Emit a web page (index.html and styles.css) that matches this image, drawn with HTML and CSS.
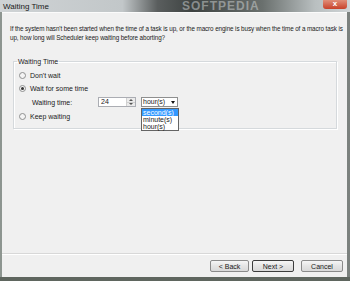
FILE: index.html
```html
<!DOCTYPE html>
<html lang="en">
<head>
    <meta charset="UTF-8">
    <title>Waiting Time</title>
    <link rel="stylesheet" href="styles.css">
</head>
<body>
<div class="window">
    <div class="titlebar">
        <span class="title">Waiting Time</span>
        <span class="brand">SOFTPEDIA</span>
        <span class="close">x</span>
    </div>

    <div class="client">
        <p class="desc">If the system hasn't been started when the time of a task is up, or the macro engine is busy when the time of a macro task is<br>up, how long will Scheduler keep waiting before aborting?</p>

        <fieldset class="group">
            <legend>Waiting Time</legend>
            <div class="row first"><span class="radio"></span>Don't wait</div>
            <div class="row"><span class="radio on"></span>Wait for some time</div>
            <div class="row controls">
                <span class="label">Waiting time:</span>
                <div class="spin">
                    <span class="spin-value">24</span>
                    <span class="spin-btns"><i class="up"></i><i class="down"></i></span>
                </div>
                <div class="combo">
                    <span class="combo-value">hour(s)</span>
                    <span class="combo-arrow"><i></i></span>
                    <ul class="combo-list">
                        <li class="sel">second(s)</li>
                        <li>minute(s)</li>
                        <li>hour(s)</li>
                    </ul>
                </div>
            </div>
            <div class="row last"><span class="radio"></span>Keep waiting</div>
        </fieldset>

        <div class="spacer"></div>

        <div class="footer">
            <button class="btn back">&lt; Back</button>
            <button class="btn next">Next &gt;</button>
            <button class="btn cancel">Cancel</button>
        </div>
    </div>
</div>
</body>
</html>
```
FILE: styles.css
```css
body {
    margin: 0;
    width: 350px;
    height: 281px;
    overflow: hidden;
    background: #5f665f;
    font-family: "Liberation Sans", Arial, sans-serif;
}

.window {
    height: 277px;
    display: flex;
    flex-direction: column;
    padding: 0 3px 0 2px;
    background: linear-gradient(to right, #8d9590, #a9b0ac 30%, #7b817e 100%);
}

.titlebar {
    position: relative;
    height: 12px;
    display: flex;
    align-items: center;
    margin: 0 -3px 0 -2px;
    padding-left: 3px;
    background: linear-gradient(to right, #cfd3d5 0%, #c2c7c9 35%, #5a5e5e 45%, #3e4342 55%, #6a706e 75%, #b9bfc0 90%, #cfd4d6 100%);
}
.title {
    font-size: 8px;
    color: #1a1a1a;
}
.brand {
    position: absolute;
    left: 182px;
    top: 0;
    font-size: 12px;
    line-height: 12px;
    font-weight: bold;
    letter-spacing: 1px;
    color: rgba(210, 214, 214, 0.5);
}
.close {
    position: absolute;
    right: 3px;
    top: 0;
    width: 24px;
    height: 9px;
    line-height: 8px;
    text-align: center;
    font-size: 8px;
    font-weight: bold;
    color: #fff;
    background: linear-gradient(#e08e78, #c8412a);
    border-radius: 0 0 3px 3px;
}

.client {
    flex: 1;
    display: flex;
    flex-direction: column;
    background: #f0f0f0;
    border-top: 1px solid #fbfbfb;
    font-size: 7px;
    color: #1a1a1a;
}

.desc {
    margin: 11px 0 0 8px;
    font-size: 6.3px;
    letter-spacing: -0.1px;
    line-height: 9px;
    white-space: nowrap;
}

.group {
    margin: 15px 10px 0 11px;
    padding: 0 0 7px 5px;
    border: 1px solid #d5d9dc;
    box-shadow: inset 1px 1px 0 #fff, 1px 1px 0 #fff;
}
.group legend {
    padding: 0 1px;
    margin-left: -2px;
    line-height: 9px;
}

.row {
    display: flex;
    align-items: center;
    height: 9px;
    margin-top: 4px;
}
.row.first {
    margin-top: 5px;
}
.row.last {
    margin-top: 5px;
}
.radio {
    width: 5px;
    height: 5px;
    border: 1px solid #8e8f8f;
    border-radius: 50%;
    background: #f4f4f4;
    margin-right: 4px;
    display: flex;
    align-items: center;
    justify-content: center;
}
.radio.on::after {
    content: "";
    width: 3px;
    height: 3px;
    border-radius: 50%;
    background: #333;
}

.controls {
    height: 10px;
    margin-top: 4px;
}
.label {
    margin-left: 13px;
    width: 66px;
}
.spin {
    display: flex;
    width: 36px;
    height: 8px;
    border: 1px solid #abadb3;
    background: #fff;
}
.spin-value {
    flex: 1;
    padding-left: 2px;
    line-height: 8px;
}
.spin-btns {
    width: 8px;
    display: flex;
    flex-direction: column;
    border-left: 1px solid #d0d0d0;
    background: #ebebeb;
}
.spin-btns i {
    flex: 1;
    display: flex;
    align-items: center;
    justify-content: center;
}
.spin-btns i::after {
    content: "";
    border-left: 2px solid transparent;
    border-right: 2px solid transparent;
}
.spin-btns .up::after {
    border-bottom: 2px solid #555;
}
.spin-btns .down {
    border-top: 1px solid #d0d0d0;
}
.spin-btns .down::after {
    border-top: 2px solid #555;
}

.combo {
    position: relative;
    display: flex;
    width: 35px;
    height: 8px;
    margin-left: 5px;
    border: 1px solid #8e8f8f;
    background: #fff;
}
.combo-value {
    flex: 1;
    padding-left: 1px;
    line-height: 8px;
}
.combo-arrow {
    width: 8px;
    display: flex;
    align-items: center;
    justify-content: center;
}
.combo-arrow i {
    border-left: 2px solid transparent;
    border-right: 2px solid transparent;
    border-top: 3px solid #111;
}
.combo-list {
    position: absolute;
    left: -1px;
    top: 10px;
    width: 36px;
    margin: 0;
    padding: 0;
    list-style: none;
    background: #fff;
    border: 1px solid #646464;
}
.combo-list li {
    height: 7px;
    line-height: 7px;
    padding-left: 1px;
}
.combo-list li.sel {
    background: #3399ff;
    color: #fff;
}

.spacer {
    flex: 1;
}

.footer {
    display: flex;
    justify-content: flex-end;
    gap: 3px;
    padding: 6px 4px 5px 0;
    border-top: 1px solid #d8d8d8;
    box-shadow: inset 0 1px 0 #fff;
}
.btn {
    height: 12px;
    padding: 0;
    font-family: "Liberation Sans", Arial, sans-serif;
    font-size: 7px;
    color: #1a1a1a;
    border: 1px solid #8a8a8a;
    border-radius: 2px;
    background: linear-gradient(#f6f6f6, #e4e4e4 50%, #d9d9d9);
}
.back {
    width: 39px;
}
.next {
    width: 42px;
    border-color: #3c3c3c;
}
.cancel {
    width: 42px;
    margin-left: 4px;
}
```
